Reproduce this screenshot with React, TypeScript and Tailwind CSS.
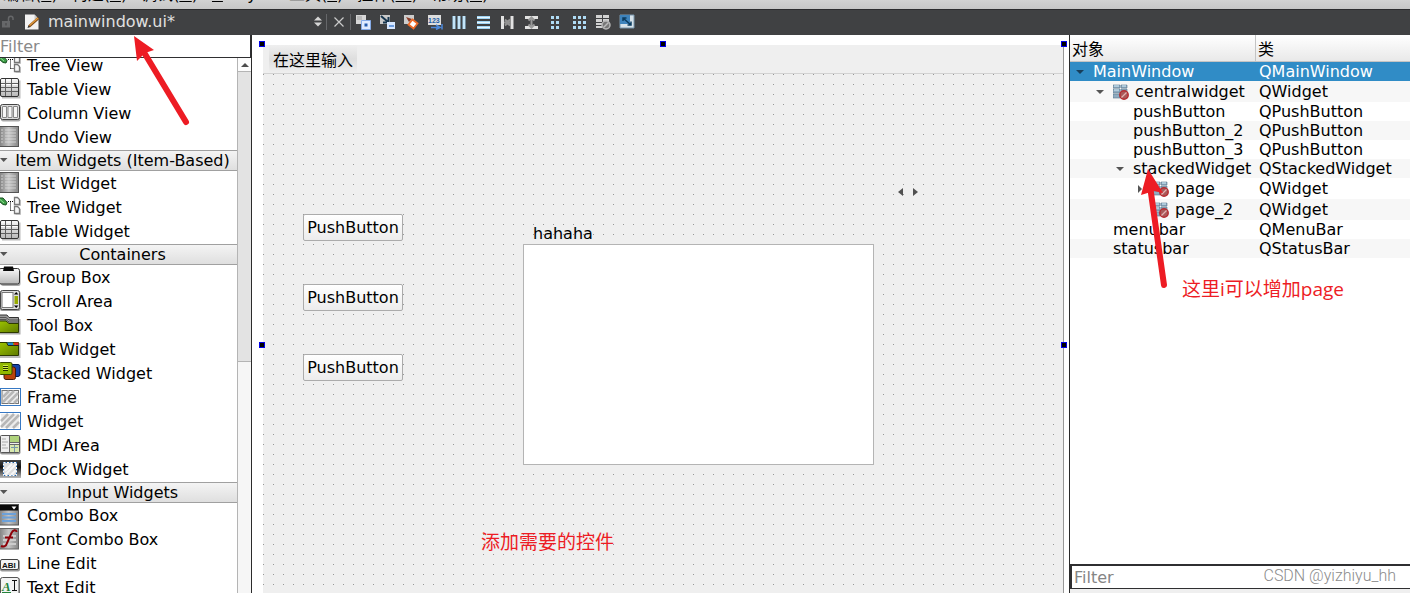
import React from "react";

function Svg({ children, className = "h-6 w-[21px]" }: { children: React.ReactNode; className?: string }) {
  return (
    <svg aria-hidden="true" viewBox="0 1 21 24" className={`shrink-0 ${className}`}>
      <defs>
        <linearGradient id="metal" x1="0" y1="0" x2="0" y2="1">
          <stop offset="0" stopColor="#f8f8f8" />
          <stop offset="1" stopColor="#b8b8b8" />
        </linearGradient>
        <linearGradient id="list" x1="0" y1="0" x2="1" y2="0">
          <stop offset="0" stopColor="#7e7e7e" />
          <stop offset="0.5" stopColor="#c4c4c4" />
          <stop offset="1" stopColor="#858585" />
        </linearGradient>
        <linearGradient id="green" x1="0" y1="0" x2="1" y2="1">
          <stop offset="0" stopColor="#9cc300" />
          <stop offset="1" stopColor="#5f7a00" />
        </linearGradient>
        <linearGradient id="dark" x1="0" y1="0" x2="0" y2="1">
          <stop offset="0" stopColor="#444" />
          <stop offset="0.4" stopColor="#111" />
          <stop offset="1" stopColor="#bbb" />
        </linearGradient>
      </defs>
      {children}
    </svg>
  );
}

const icons: Record<string, React.ReactNode> = {
  tree: (
    <Svg>
      <path d="M-1 3L3 3 7 7.500 6 10 3 9.500 -1 6z" fill="#3c9c46" stroke="#174d1e" />
      <path d="M0 4.500l4 3.500" stroke="#8fe08f" />
      <path d="M8 6.500h5M10.500 6.500v9M10.500 15.500h3" fill="none" stroke="#000" strokeDasharray="1 1" />
      <path d="M14.500 2.500h3l2 2v5h-5zM14.500 11.500h3l2 2v5h-5z" fill="#f6f6f6" stroke="#777" strokeWidth="1.300" />
      <path d="M20.500 5v5.500h-5M20.500 14v5.500h-5" fill="none" stroke="#bbb" />
    </Svg>
  ),
  table: (
    <Svg>
      <path d="M2 20.500h17.500v-17" fill="none" stroke="#bbb" strokeWidth="2" />
      <rect x=".5" y="1.500" width="18" height="18" rx="1.500" fill="url(#metal)" stroke="#333" />
      <path d="M1 6.500h17M1 10.500h17M1 14.500h17M5.500 2v17M11.500 2v17" stroke="#606060" fill="none" />
      <path d="M1 7.500h4M6.500 7.500h4M12.500 7.500h5M1 3h4M6.500 3h4" stroke="#fff" />
    </Svg>
  ),
  column: (
    <Svg>
      <rect x="1" y="4" width="19.500" height="16.500" rx="2" fill="#aaa" />
      <rect x="0.500" y="3.500" width="19" height="15" rx="2" fill="#ddd" stroke="#444" />
      <path d="M2.500 5.500h4v11h-4zM8 5.500h4v11h-4zM13.500 5.500h4v11h-4z" fill="#f6f6f6" stroke="#888" />
    </Svg>
  ),
  list: (
    <Svg>
      <rect x="-1" y="1.500" width="19.500" height="20" fill="url(#list)" stroke="#555" />
      <path d="M5 5h11M5 8h11M5 11h11M5 14h11M5 17h11" stroke="#e6e6e6" opacity=".7" />
      <path d="M1 5h2M1 8h2M1 11h2M1 14h2M1 17h2" stroke="#d0d0d0" />
    </Svg>
  ),
  group: (
    <Svg>
      <rect x="1" y="5" width="19.500" height="16" rx="2" fill="#aaa" />
      <rect x="-1" y="3.500" width="20.500" height="15.500" rx="2" fill="url(#metal)" stroke="#333" />
      <path d="M4 1.500h9l1 4.500H3z" fill="#080808" />
    </Svg>
  ),
  scroll: (
    <Svg>
      <rect x="0" y="2" width="20.500" height="20" rx="2" fill="#999" />
      <rect x=".5" y="1.500" width="19" height="19" rx="2" fill="#ddd" stroke="#444" />
      <rect x="2" y="3.500" width="11" height="15" fill="#fff" stroke="#777" />
      <path d="M14.500 7h3.500v8h-3.500z" fill="#96a900" />
      <path d="M14 5.500l2.200-2.500 2.200 2.500zM14 16.500l2.200 2.500 2.200-2.500z" fill="#000" />
    </Svg>
  ),
  toolbox: (
    <Svg>
      <path d="M0 20.500h19.500V6" fill="none" stroke="#aaa" strokeWidth="2" />
      <path d="M-1 2h8l2 2.500h9.500v8H-1z" fill="#999" stroke="#333" />
      <path d="M-1 4.500h7l3 2.500h9.500M-1 6.500h7l3 2.500h9.500" fill="none" stroke="#555" />
      <path d="M-1 8h7l3 2.500h9.500v9H-1z" fill="url(#green)" stroke="#2d3a00" />
    </Svg>
  ),
  tab: (
    <Svg>
      <path d="M0 20h19.500V6" fill="none" stroke="#bbb" strokeWidth="2" />
      <path d="M-1 5.500h19.500v13H-1z" fill="url(#green)" stroke="#2d3a00" />
      <path d="M7 5.500h6v2.500H8z" fill="#2386d0" />
      <path d="M13.500 5.500h5v2.500h-4z" fill="#e12c20" />
      <path d="M6.500 5.500l1.500 3H19" fill="none" stroke="#222" />
    </Svg>
  ),
  stacked: (
    <Svg>
      <rect x="9" y="3.500" width="11" height="12" rx="2" fill="#1644a8" stroke="#001750" />
      <rect x="4" y="6" width="11.500" height="12.500" rx="2" fill="#b8430d" stroke="#47180a" />
      <rect x="-1" y="1.500" width="13" height="12" rx="1.500" fill="#91b800" stroke="#354400" />
      <path d="M3 5.500h5M3 7.500h5M3 9.500h5" stroke="#243000" />
      <path d="M3 6.500h5M3 8.500h5M3 4.500h5" stroke="#d4f044" />
    </Svg>
  ),
  frame: (
    <Svg>
      <rect x=".5" y="3.500" width="20" height="17" fill="#fff" stroke="#3779c4" />
      <rect x="2" y="5.500" width="16.500" height="13" fill="#eee" stroke="#777" />
      <path d="M3 12l6-6M3 17L14 6M8 18L18 8M14 18l4-4" stroke="#b7b7b7" strokeWidth="2.500" />
    </Svg>
  ),
  widget: (
    <Svg>
      <rect x="-.5" y="3.500" width="21" height="17" fill="#fff" stroke="#3779c4" />
      <path d="M1 5h18v14H1z" fill="#ececec" />
      <path d="M1 12l7-7M1 18L14 5M6 19L19 6M13 19l6-6" stroke="#b7b7b7" strokeWidth="2.500" />
    </Svg>
  ),
  mdi: (
    <Svg>
      <rect x="0" y="3" width="20.500" height="18.500" rx="2" fill="#999" />
      <rect x=".5" y="2.500" width="19" height="17" rx="1" fill="#eee" stroke="#555" />
      <path d="M10 3h9v6h-9z" fill="#afd37c" />
      <path d="M10 11h9v8h-9z" fill="#d8e8ad" />
      <path d="M9.500 3v16M10 9.500h9M10 11.500h9" stroke="#666" />
      <path d="M2 6h4M2 9h6M2 12h4M2 15h6" stroke="#aaa" />
      <path d="M11 14.500h7M14.500 12v7" stroke="#7697aa" />
    </Svg>
  ),
  dock: (
    <Svg>
      <rect x="0" y="3" width="21" height="18" fill="url(#dark)" />
      <rect x="3.500" y="5.500" width="13" height="13" fill="#dedede" stroke="#2467ad" />
      <path d="M5 14l7-7M5 18L16 7M11 18l5-5" stroke="#f7f7f7" strokeWidth="2" />
      <rect x="3.500" y="5.500" width="13" height="13" fill="none" stroke="#fff" strokeDasharray="2 1.500" />
    </Svg>
  ),
  combo: (
    <Svg>
      <rect x="-1" y="1.500" width="19.500" height="20.500" fill="url(#list)" stroke="#555" />
      <path d="M0 2h18v5.500H0z" fill="#080808" />
      <path d="M11.500 3.500h5L14 6.500z" fill="#fff" />
      <path d="M2 11h14M2 14.500h14M2 18h14" stroke="#6ca1da" strokeWidth="2.200" />
    </Svg>
  ),
  fontcombo: (
    <Svg>
      <rect x="-1" y="1.500" width="19.500" height="20.500" fill="url(#list)" stroke="#666" />
      <path d="M3 9h13M3 13h13M3 17h13" stroke="#ccc" strokeWidth="2" />
      <path d="M16.500 5c0-3-4-2-5 1L7 16c-1 4-4 4-6 3M5 10.500h8" fill="none" stroke="#8e0008" strokeWidth="2" />
    </Svg>
  ),
  line: (
    <Svg>
      <rect x="0" y="9" width="20" height="11.500" rx="2" fill="#999" />
      <rect x=".5" y="8.500" width="18" height="10" rx="1.500" fill="#f4f4f4" stroke="#444" />
      <text x="2" y="16.500" fontSize="8" fontWeight="bold" fontFamily="Liberation Sans" fill="#111">ABI</text>
    </Svg>
  ),
  text: (
    <Svg>
      <rect x="0" y="3" width="20" height="21" rx="2" fill="#999" />
      <rect x=".5" y="2.500" width="18.500" height="19" rx="2" fill="#f3f3f3" stroke="#555" />
      <text x="2" y="15.500" fontSize="13" fontStyle="italic" fontWeight="bold" fontFamily="Liberation Serif" fill="#23833a">A</text>
      <path d="M12 5.500h5M14.500 5.500v10M12 15.500h5" stroke="#111" fill="none" />
      <path d="M2 17.500h9" stroke="#23833a" />
    </Svg>
  ),
};

const groups: { title: string | null; items: [string, string][] }[] = [
  { title: null, items: [["tree", "Tree View"], ["table", "Table View"], ["column", "Column View"], ["list", "Undo View"]] },
  { title: "Item Widgets (Item-Based)", items: [["list", "List Widget"], ["tree", "Tree Widget"], ["table", "Table Widget"]] },
  {
    title: "Containers",
    items: [
      ["group", "Group Box"], ["scroll", "Scroll Area"], ["toolbox", "Tool Box"], ["tab", "Tab Widget"], ["stacked", "Stacked Widget"],
      ["frame", "Frame"], ["widget", "Widget"], ["mdi", "MDI Area"], ["dock", "Dock Widget"],
    ],
  },
  { title: "Input Widgets", items: [["combo", "Combo Box"], ["fontcombo", "Font Combo Box"], ["line", "Line Edit"], ["text", "Text Edit"]] },
];

function WidgetBox() {
  return (
    <aside className="flex w-[252px] shrink-0 flex-col border-r border-[#2b2b2b] bg-white">
      <input
        aria-label="Filter widgets"
        placeholder="Filter"
        className="h-[23px] w-full shrink-0 border-r border-b border-[#2f2f31] bg-white px-0 text-base leading-5 outline-none placeholder:text-[#8a8a8a]"
      />
      <div className="flex min-h-0 flex-1">
        <div className="flex min-w-0 flex-1 flex-col justify-start overflow-hidden">
          <div className="-mt-1">
            {groups.map((g, i) => (
              <section key={i}>
                {g.title && (
                  <h2 className="mb-px">
                    <button className="flex h-[21px] w-full items-center border-y border-[#a0a0a0] bg-linear-to-b from-[#f4f4f4] to-[#dfdfdf] text-base leading-5">
                      <svg aria-hidden="true" viewBox="0 0 8 5" className="h-[5px] w-2 shrink-0"><path d="M0 0h7.500L3.700 4z" fill="#555" /></svg>
                      <span className="flex-1 text-center whitespace-nowrap">{g.title}</span>
                    </button>
                  </h2>
                )}
                <ul>
                  {g.items.map(([icon, label]) => (
                    <li key={label} className="flex h-6 items-center gap-1.5">
                      {icons[icon]}
                      <span className="leading-5">{label}</span>
                    </li>
                  ))}
                </ul>
              </section>
            ))}
          </div>
        </div>
        <div className="flex w-[14px] shrink-0 flex-col border-l border-[#b4b4b4] bg-[#f6f6f6]">
          <button aria-label="Scroll up" className="flex h-[14px] items-center justify-center border-b border-[#b4b4b4] bg-[#fcfcfc]">
            <svg viewBox="0 0 8 4" className="h-1 w-2"><path d="M0 4L4 0l4 4z" fill="#4c4c4c" /></svg>
          </button>
          <div className="h-[290px] border-b border-[#b4b4b4] bg-[#e3e3e3]" />
        </div>
      </div>
    </aside>
  );
}

function Tool({ label, children }: { label: string; children: React.ReactNode }) {
  return (
    <button aria-label={label} className="flex h-6 w-6 items-center justify-center">
      <svg viewBox="0 0 16 16" className="h-4 w-4">{children}</svg>
    </button>
  );
}

function Toolbar() {
  return (
    <div className="flex h-[26px] shrink-0 items-center border-t border-[#2c2c2e] bg-[#404143] pb-0.5 text-[#e0e0e0]">
      <svg aria-hidden="true" viewBox="0 0 14 14" className="ml-px h-[14px] w-[14px]">
        <path d="M1 6h8v6.500H1z" fill="#666769" />
        <path d="M7.500 6V3.500c0-3 4.500-3 4.500 0V5" fill="none" stroke="#666769" strokeWidth="1.500" />
        <path d="M4.500 8h1v2.500h-1z" fill="#404143" />
      </svg>
      <svg aria-hidden="true" viewBox="0 0 16 16" className="ml-2.5 h-4 w-4">
        <path d="M0 .5h9.500L13.500 5v10.500H0z" fill="#f2f2f2" />
        <path d="M9.500.5V5h4" fill="#c8c8c8" />
        <path d="M4 12.500L13.500 4" stroke="#7b4715" strokeWidth="2.500" />
        <path d="M4.500 11.500L13 4" stroke="#e19a3d" strokeWidth="1.500" />
        <path d="M2.500 14l1-2.500 1.500 1.500z" fill="#222" />
      </svg>
      <button className="ml-[7px] flex w-[274px] items-center justify-between text-base leading-5">
        <span>mainwindow.ui*</span>
        <svg aria-hidden="true" viewBox="0 0 8 11" className="h-[11px] w-2"><path d="M0 4.500L4 .5l4 4zM0 6.500h8l-4 4z" fill="#d5d5d5" /></svg>
      </button>
      <span className="ml-1 h-4 w-px bg-[#66676a]" />
      <button aria-label="Close" className="flex w-[23px] justify-center">
        <svg viewBox="0 0 10 10" className="h-2.5 w-2.5"><path d="M.5.5l9 9M9.500.5l-9 9" stroke="#cbcbcb" strokeWidth="1.200" /></svg>
      </button>
      <span className="h-4 w-px bg-[#66676a]" />
      <div className="flex">
        <Tool label="Edit widgets">
          <path d="M1 1h10v9H1z" fill="#d7d7d7" /><path d="M2 2h5v4H2z" fill="#bbb" />
          <path d="M6.500 6.500h9v9h-9z" fill="#dfeaff" stroke="#86abe8" /><path d="M9.500 9.500h3v3h-3z" fill="#265cae" />
        </Tool>
        <Tool label="Edit signals and slots">
          <path d="M1 1h10v9H1z" fill="#c9c9c9" /><path d="M2 2l7 6M9.500 3v5.500H4" fill="none" stroke="#17364f" strokeWidth="2" />
          <path d="M8 8h8v7H8z" fill="#d7e7ff" /><path d="M10 12h5" stroke="#4a84d5" strokeWidth="1.500" />
        </Tool>
        <Tool label="Edit buddies">
          <path d="M1 1h10v9H1z" fill="#ccc" /><path d="M3 3l6 2-3 3z" fill="#8d3c28" />
          <path d="M9.500 5.500l5 4-4 5-5-4z" fill="#fff" stroke="#ed6a26" strokeWidth="1.800" />
        </Tool>
        <Tool label="Edit tab order">
          <path d="M1 1h13v10H1z" fill="#ddd" /><text x="1" y="9" fontSize="7" fontWeight="bold" fontFamily="Liberation Sans" fill="#245da5">123</text>
          <path d="M4 13.500h8M9 11l4 2.500-4 2M15 10v5.500" fill="none" stroke="#4c89dc" strokeWidth="1.500" />
        </Tool>
        <Tool label="Lay out horizontally"><path d="M3 2v13M8 2v13M13 2v13" stroke="#9fd3f3" strokeWidth="3" /><path d="M3 2v13M8 2v13M13 2v13" stroke="#e9f7ff" /></Tool>
        <Tool label="Lay out vertically"><path d="M2 3.500h13M2 8.500h13M2 13.500h13" stroke="#9fd3f3" strokeWidth="3" /><path d="M2 3.500h13M2 8.500h13M2 13.500h13" stroke="#e9f7ff" /></Tool>
        <Tool label="Horizontal splitter"><path d="M2 2h3v13H2zM11.500 2h3v13h-3z" fill="#e2e2e2" /><path d="M5 8.500h7M6 5.500l3 3-3 3M11 5.500l-3 3 3 3" fill="none" stroke="#929292" strokeWidth="2" /></Tool>
        <Tool label="Vertical splitter"><path d="M2 2h13v3H2zM2 12h13v3H2z" fill="#e2e2e2" /><path d="M8.500 4v9M5.500 6.500l3-3 3 3M5.500 10.500l3 3 3-3" fill="none" stroke="#999" strokeWidth="2" /></Tool>
        <Tool label="Form layout"><path d="M4 2h3v3H4zM9 2h3v3H9zM4 7h3v3H4zM9 7h3v3H9zM4 12h3v3H4zM9 12h3v3H9z" fill="#afdbf5" /></Tool>
        <Tool label="Grid layout"><path d="M2 2h3v3H2zM7 2h3v3H7zM12 2h3v3h-3zM2 7h3v3H2zM7 7h3v3H7zM12 7h3v3h-3zM2 12h3v3H2zM7 12h3v3H7zM12 12h3v3h-3z" fill="#afdbf5" /></Tool>
        <Tool label="Break layout">
          <path d="M1 1h6v3H1zM8 1h6v3H8zM1 5h6v3H1zM8 5h6v3H8zM1 9h6v2H1zM1 12h6v2H1z" fill="#d2d2d2" />
          <circle cx="11" cy="11" r="4" fill="#777" stroke="#b5b5b5" strokeWidth="1.500" /><path d="M8.500 13.500l5-5" stroke="#bbb" strokeWidth="1.500" />
        </Tool>
        <Tool label="Adjust size">
          <path d="M1 1h14v13H1z" fill="#d6e2ea" stroke="#7896ac" /><path d="M1 1h10v9H1z" fill="#3e83bc" />
          <path d="M4 4l8 7M4 7V4h3.500M12 7.500V11H8.500" fill="none" stroke="#0b3c60" strokeWidth="1.500" />
        </Tool>
      </div>
    </div>
  );
}

function MenuItem({ text, k }: { text: string; k: string }) {
  return <a href="#menu" className="whitespace-nowrap">{text}(<u>{k}</u>)</a>;
}

function Handle({ className }: { className: string }) {
  return <span className={`absolute h-1.5 w-1.5 border border-[#0000e8] bg-black ${className}`} />;
}

function RedArrow({ className, w, h, d, head }: { className: string; w: number; h: number; d: string; head: string }) {
  return (
    <svg aria-hidden="true" width={w} height={h} viewBox={`0 0 ${w} ${h}`} className={`pointer-events-none absolute z-10 ${className}`}>
      <path d={d} stroke="#ed1c24" strokeWidth="6" strokeLinecap="round" />
      <path d={head} fill="#ed1c24" />
    </svg>
  );
}

function Canvas() {
  return (
    <main className="relative min-w-0 flex-1 bg-white pt-2.5 pr-[5px] pl-[11px]">
      <div className="flex h-full flex-col border-r border-[#989898] bg-[#efefef]">
        <div className="flex h-[29px] shrink-0 border-b border-[#d2d2d2] pl-1.5">
          <button className="bg-linear-to-b from-[#efefef] via-[#dedede] to-[#efefef] px-1 pt-1 text-base leading-6">在这里输入</button>
        </div>
        <div className="relative min-h-0 flex-1 overflow-hidden bg-[linear-gradient(90deg,transparent_1px,#efefef_1px),linear-gradient(#989898_1px,transparent_1px)] bg-size-[10px_10px]">
          {["top-[140px]", "top-[210px]", "top-[280px]"].map((top) => (
            <button key={top} className={`absolute left-10 h-[27px] w-[100px] rounded-xs border border-[#ababab] bg-linear-to-b from-white to-[#ececec] text-base leading-5 ${top}`}>
              PushButton
            </button>
          ))}
          <span className="absolute top-[150px] left-[270px] leading-5">hahaha</span>
          <div className="absolute top-[170px] left-[260px] h-[221px] w-[351px] border border-[#b4b4b4] bg-white" />
          <button aria-label="Previous page" className="absolute top-[114px] left-[635px]">
            <svg viewBox="0 0 5 8" className="h-2 w-[5px]"><path d="M5 0v8L0 4z" fill="#505050" /></svg>
          </button>
          <button aria-label="Next page" className="absolute top-[114px] left-[650px]">
            <svg viewBox="0 0 5 8" className="h-2 w-[5px]"><path d="M0 0v8l5-4z" fill="#505050" /></svg>
          </button>
          <p className="absolute top-[456px] left-[218px] font-['Open_Sans','Noto_Sans_CJK_SC',sans-serif] text-[19px] leading-6 text-[#ed1c24]">添加需要的控件</p>
        </div>
      </div>
      <Handle className="top-1.5 left-[7px]" />
      <Handle className="top-1.5 left-1/2 -ml-px" />
      <Handle className="top-1.5 right-0.5" />
      <Handle className="top-[307px] left-[7px]" />
      <Handle className="top-[307px] right-0.5" />
    </main>
  );
}

type Row = { name: string; type: string; pad: string; h: string; arrow?: "down" | "right" | "none"; icon?: boolean; bg: string };
const rows: Row[] = [
  { name: "MainWindow", type: "QMainWindow", pad: "pl-1.5", h: "h-[19px]", arrow: "down", bg: "bg-[#308cc6] text-white" },
  { name: "centralwidget", type: "QWidget", pad: "pl-[26px]", h: "h-[21px]", arrow: "down", icon: true, bg: "bg-[#f7f7f7]" },
  { name: "pushButton", type: "QPushButton", pad: "pl-[63px]", h: "h-[19px]", bg: "bg-white" },
  { name: "pushButton_2", type: "QPushButton", pad: "pl-[63px]", h: "h-[19px]", bg: "bg-[#f7f7f7]" },
  { name: "pushButton_3", type: "QPushButton", pad: "pl-[63px]", h: "h-[19px]", bg: "bg-white" },
  { name: "stackedWidget", type: "QStackedWidget", pad: "pl-[46px]", h: "h-[19px]", arrow: "down", bg: "bg-[#f7f7f7]" },
  { name: "page", type: "QWidget", pad: "pl-[66px]", h: "h-[21px]", arrow: "right", icon: true, bg: "bg-white" },
  { name: "page_2", type: "QWidget", pad: "pl-[66px]", h: "h-[21px]", arrow: "none", icon: true, bg: "bg-[#f7f7f7]" },
  { name: "menubar", type: "QMenuBar", pad: "pl-[43px]", h: "h-[19px]", bg: "bg-white" },
  { name: "statusbar", type: "QStatusBar", pad: "pl-[43px]", h: "h-[19px]", bg: "bg-[#f7f7f7]" },
];

function Inspector() {
  return (
    <aside className="relative flex w-[341px] shrink-0 flex-col border-l border-[#2b2b2b] bg-white">
      <table className="w-full table-fixed border-separate border-spacing-0 text-left">
        <colgroup><col className="w-[186px]" /><col /></colgroup>
        <thead>
          <tr className="bg-linear-to-b from-white to-[#e8e8e8]">
            <th className="h-[27px] border-r border-b border-[#c4c4c4] p-0 pt-1 pl-0.5 leading-[22px] font-normal">对象</th>
            <th className="h-[27px] border-b border-[#c4c4c4] p-0 pt-1 pl-0.5 leading-[22px] font-normal">类</th>
          </tr>
        </thead>
        <tbody>
          {rows.map((r) => (
            <tr key={r.name} className={r.bg}>
              <td className={`p-0 ${r.pad}`}>
                <div className={`flex items-center ${r.h}`}>
                  {r.arrow && (
                    <svg aria-hidden="true" viewBox="0 0 8 8" className="mr-[9px] h-2 w-2 shrink-0">
                      {r.arrow === "down" && <path d="M0 2h8L4 6z" fill={r.name === "MainWindow" ? "#173e5b" : "#555"} />}
                      {r.arrow === "right" && <path d="M2 0v8l4-4z" fill="#555" />}
                    </svg>
                  )}
                  {r.icon && (
                    <svg aria-hidden="true" viewBox="0 0 16 16" className="mr-1.5 h-4 w-4 shrink-0">
                      <path d="M0 1h7v3H0zM8 1h6v3H8zM0 5h7v4H0zM8 5h6v4H8zM0 10h7v4H0z" fill="#8fabc0" stroke="#57758d" strokeWidth=".6" />
                      <path d="M1 2h5M9 2h4M1 6h5" stroke="#d4eefb" />
                      <circle cx="11" cy="11" r="4.200" fill="#a95959" stroke="#b52d32" strokeWidth="1.500" />
                      <path d="M8.500 13.500l5-5" stroke="#e3b1b1" strokeWidth="1.300" />
                    </svg>
                  )}
                  <span className="leading-[19px] whitespace-nowrap">{r.name}</span>
                </div>
              </td>
              <td className="p-0 pl-[3px] leading-[19px]">{r.type}</td>
            </tr>
          ))}
        </tbody>
      </table>
      <RedArrow className="top-[134px] left-[70px]" w={30} h={120} d="M10 17L24 116" head="M8 0l15 24-9-2-13 4z" />
      <p className="absolute top-[242px] left-[112px] font-['Open_Sans','Noto_Sans_CJK_SC',sans-serif] text-[19px] leading-6 whitespace-nowrap text-[#ed1c24]">这里i可以增加page</p>
      <div className="mt-auto bg-[#efefef] pb-1">
        <input
          aria-label="Filter objects"
          placeholder="Filter"
          className="block h-[25px] w-full border-t-2 border-b border-l-2 border-[#2f2f31] bg-white px-0.5 text-base leading-5 outline-none placeholder:text-[#858585]"
        />
      </div>
      <p className="absolute right-3.5 bottom-[7px] font-[Roboto,sans-serif] text-base leading-5 font-light text-[#8c8c8c]">CSDN @yizhiyu_hh</p>
    </aside>
  );
}

export default function App() {
  return (
    <div className="relative flex h-screen flex-col overflow-hidden bg-white font-['DejaVu_Sans','Noto_Sans_CJK_SC',sans-serif] text-base text-black">
      <nav className="flex h-[9px] shrink-0 items-end gap-3.5 overflow-hidden bg-linear-to-b from-[#d2d2d2] to-[#c6c6c6] pb-1 pl-[3px] leading-5">
        <MenuItem text="编辑" k="E" />
        <MenuItem text="构建" k="B" />
        <MenuItem text="调试" k="D" />
        <a href="#menu"><u>A</u>nalyze</a>
        <MenuItem text="工具" k="T" />
        <MenuItem text="控件" k="W" />
        <MenuItem text="帮助" k="H" />
      </nav>
      <Toolbar />
      <div className="flex min-h-0 flex-1">
        <WidgetBox />
        <Canvas />
        <Inspector />
      </div>
      <RedArrow className="top-[36px] left-[132px]" w={60} h={92} d="M13 18L54 86" head="M2 0l20 14-9 3-8 8z" />
    </div>
  );
}
